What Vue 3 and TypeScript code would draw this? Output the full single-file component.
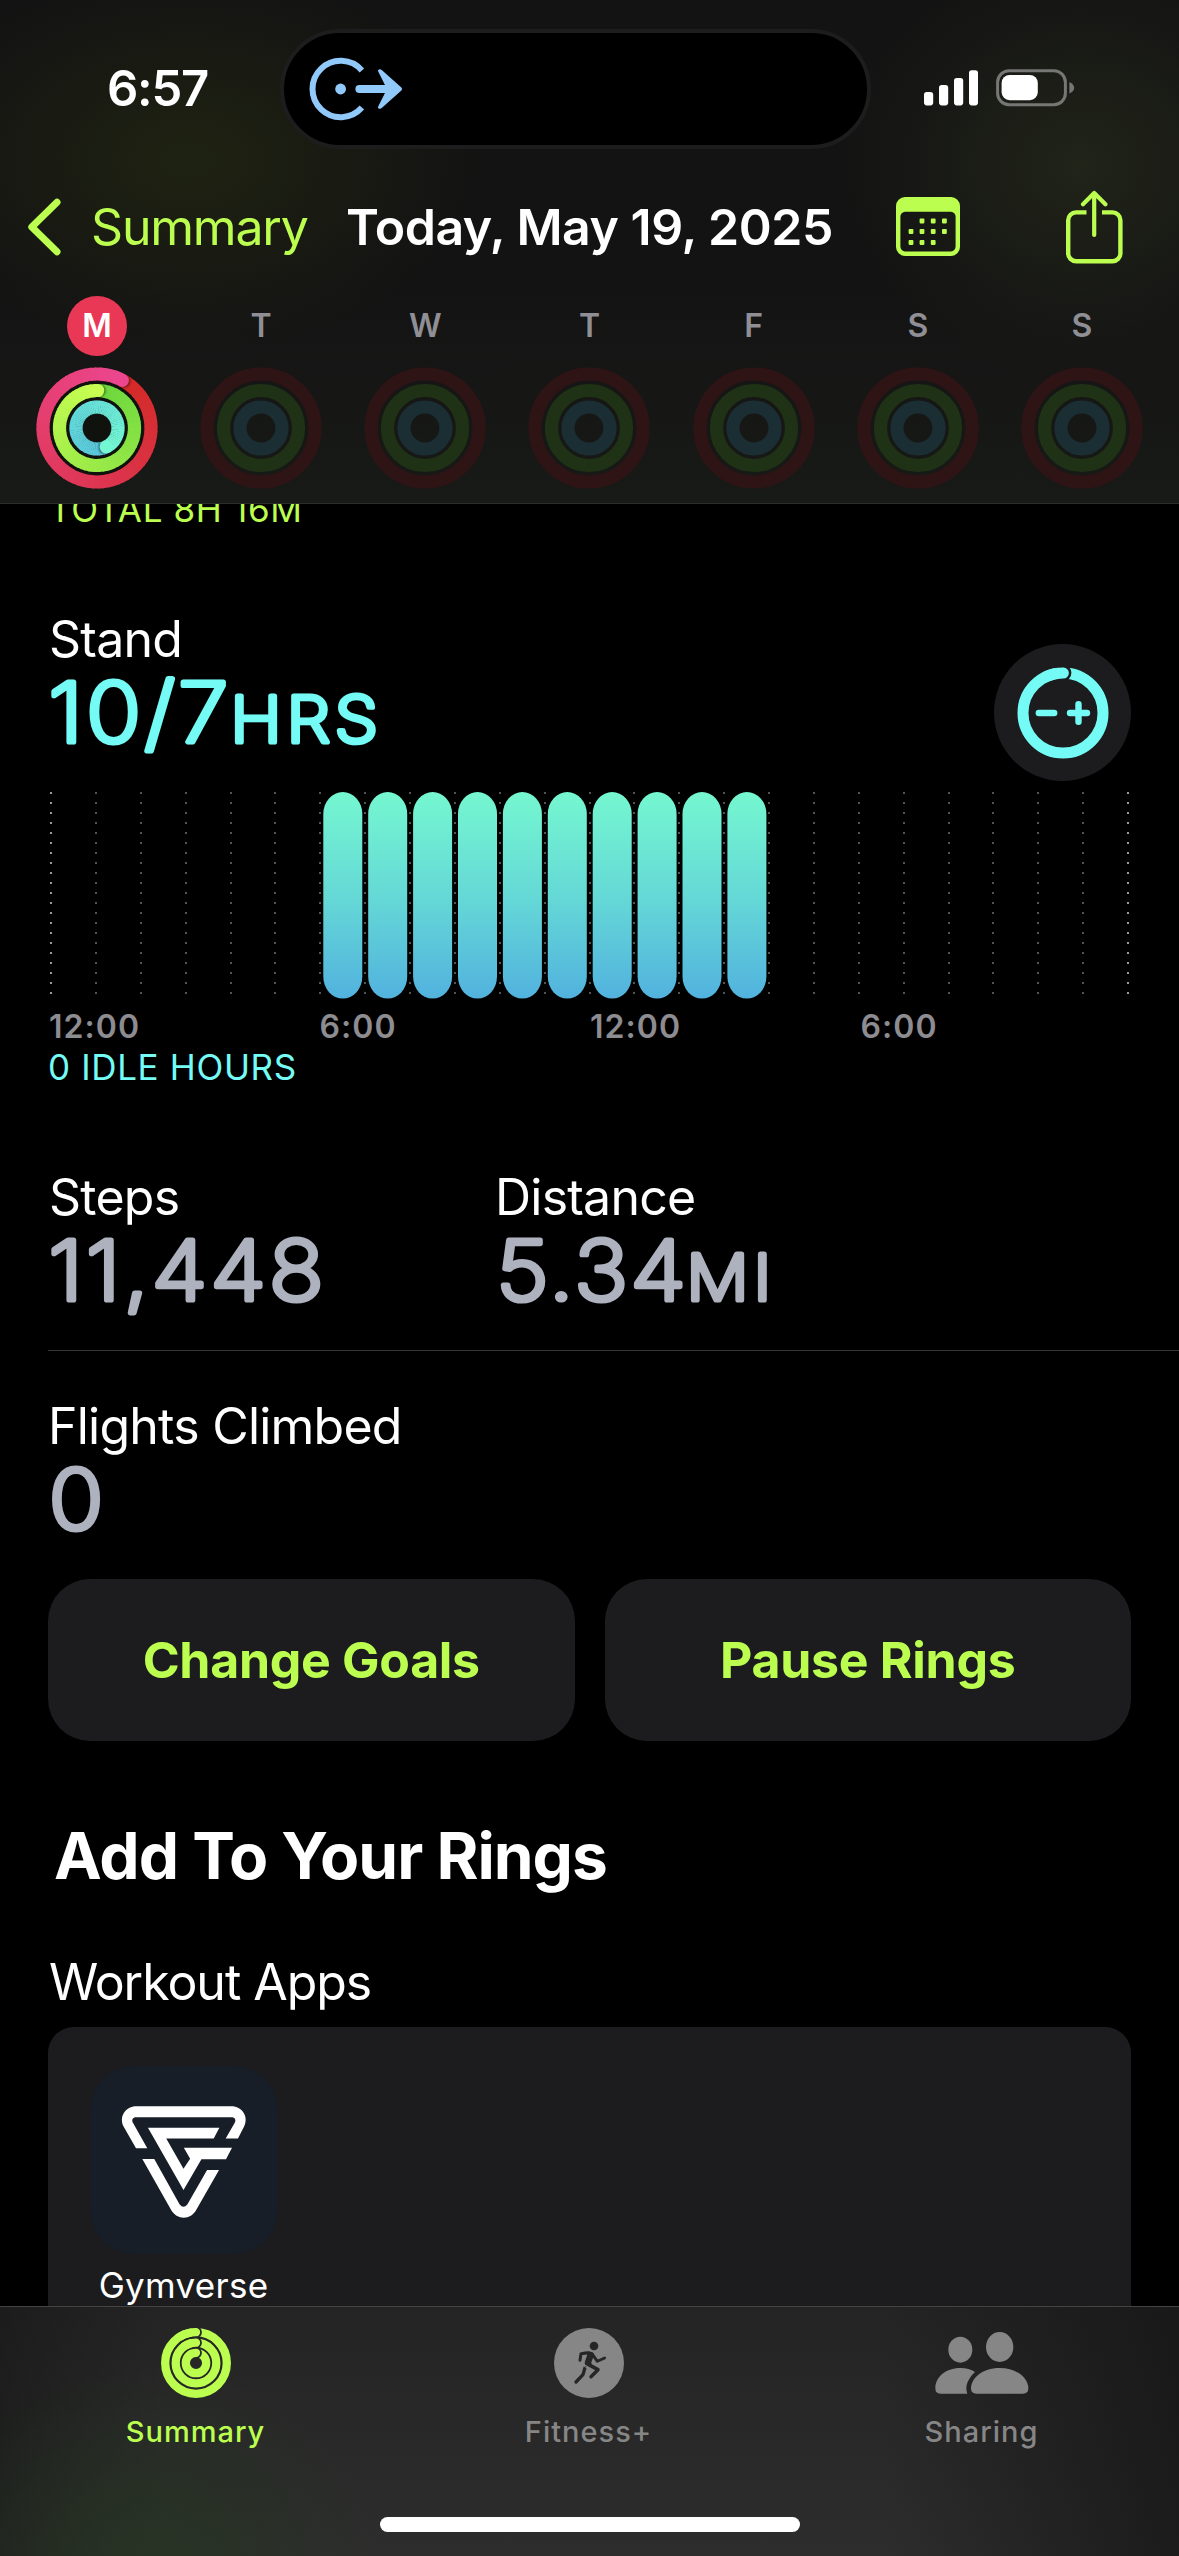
<script setup lang="ts">
type Rgb = [number, number, number]

interface RingSpec {
  radius: number
  start: number
  from: Rgb
  to: Rgb
  dim: string
}

interface Segment {
  d: string
  color: string
}

interface Glyphs {
  text: string
  x: number
  size: number
  spacing: number
}

const days = ['M', 'T', 'W', 'T', 'F', 'S', 'S']

const ringSpecs: RingSpec[] = [
  { radius: 54, start: 28, from: [211, 42, 38], to: [236, 70, 142], dim: '#2f1416' },
  { radius: 37.5, start: 1, from: [108, 215, 62], to: [200, 254, 82], dim: '#203216' },
  { radius: 21, start: 154, from: [88, 196, 220], to: [116, 248, 212], dim: '#1b2e34' },
]

const point = (r: number, deg: number): [number, number] => {
  const a = ((deg - 90) * Math.PI) / 180
  return [61 + r * Math.cos(a), 61 + r * Math.sin(a)]
}

const mix = (a: Rgb, b: Rgb, t: number): string =>
  `rgb(${a.map((v, i) => Math.round(v + (b[i] - v) * t)).join(',')})`

// A swept gradient is drawn as short overlapping arcs, clockwise from the cap.
const segments = (ring: RingSpec): Segment[] => {
  const step = 5
  const list: Segment[] = []
  for (let deg = 0; deg < 360; deg += step) {
    const [x1, y1] = point(ring.radius, ring.start + deg)
    const [x2, y2] = point(ring.radius, ring.start + deg + step + (deg + step < 360 ? 1 : 0))
    list.push({
      d: `M${x1.toFixed(2)} ${y1.toFixed(2)}A${ring.radius} ${ring.radius} 0 0 1 ${x2.toFixed(2)} ${y2.toFixed(2)}`,
      color: mix(ring.from, ring.to, deg / 355),
    })
  }
  return list
}

const todayRings = ringSpecs.map((ring) => ({
  segments: segments(ring),
  cap: point(ring.radius, ring.start),
  shadow: point(ring.radius, ring.start + 110 / ring.radius),
  color: mix(ring.from, ring.to, 1),
}))

const hourLines = Array.from({ length: 25 }, (_, i) => 3 + Math.round(i * 44.875))
const standBars = Array.from({ length: 10 }, (_, i) => 275.3 + i * 44.9)
const hourLabels = ['12:00', '6:00', '12:00', '6:00']

const standValue: Glyphs[] = [
  { text: '10/7', x: 0.4, size: 83, spacing: 3.2 },
  { text: 'HRS', x: 182.6, size: 63.5, spacing: 4.6 },
]
const stepsValue: Glyphs[] = [{ text: '11,448', x: 0.4, size: 83, spacing: 2.95 }]
const distanceValue: Glyphs[] = [
  { text: '5.34', x: 1.3, size: 83, spacing: 2.5 },
  { text: 'MI', x: 191.6, size: 63.5, spacing: 4.4 },
]
const flightsValue: Glyphs[] = [{ text: '0', x: 0.8, size: 83, spacing: 0 }]
const stretch = 1.09

const calendarDots = [
  [26, 24], [37.2, 24], [48.4, 24],
  [15, 34.5], [26, 34.5], [37.2, 34.5], [48.4, 34.5],
  [15, 45.5], [26, 45.5], [37.2, 45.5],
]
</script>

<template>
  <div class="screen">
    <header class="top">
      <div class="status">
        <div class="clock">6:57</div>
        <div class="island">
          <svg class="activity" width="96" height="64" viewBox="0 0 96 64">
            <path d="M52.9 13.4A28.2 28.2 0 1 0 52.9 50.6" fill="none" stroke="#92c9fb" stroke-width="6" />
            <circle cx="31.6" cy="32" r="5.4" fill="#92c9fb" />
            <path d="M50.4 32H80" stroke="#92c9fb" stroke-width="8" stroke-linecap="round" />
            <path d="M69.2 14.6C68.2 12.4 71.2 11.2 73 13.2L92.4 30.6Q93.8 32 92.4 33.4L73 50.8C71.2 52.8 68.2 51.6 69.2 49.4L77 34V30Z" fill="#92c9fb" />
          </svg>
        </div>
        <div class="indicators">
          <svg width="54" height="36" viewBox="0 0 54 36">
            <rect x="0" y="22" width="9.2" height="13.4" rx="2.8" fill="#fff" />
            <rect x="15" y="15" width="9.2" height="20.4" rx="2.8" fill="#fff" />
            <rect x="30" y="8" width="9.2" height="27.4" rx="2.8" fill="#fff" />
            <rect x="45" y="0.2" width="9" height="35.2" rx="2.8" fill="#fff" />
          </svg>
          <svg width="80" height="38" viewBox="0 0 80 38">
            <rect x="1.6" y="1.8" width="67.8" height="34" rx="11.5" fill="none" stroke="#767775" stroke-width="3" />
            <rect x="5.6" y="6" width="36.2" height="25.2" rx="8" fill="#fff" />
            <path d="M73.4 13Q78.2 15.4 78.2 18.8Q78.2 22.2 73.4 24.6Z" fill="#767775" />
          </svg>
        </div>
      </div>

      <nav class="nav">
        <svg class="back" width="34" height="58" viewBox="0 0 34 58">
          <path d="M30 4.2L4.8 29L30 53.8" fill="none" stroke="#bbfe4f" stroke-width="7" stroke-linecap="round" stroke-linejoin="round" />
        </svg>
        <span class="back-label">Summary</span>
        <h1 class="title">Today, May 19, 2025</h1>
        <svg class="calendar" width="64" height="60" viewBox="0 0 64 60">
          <path fill-rule="evenodd" d="M9 0H55A9 9 0 0 1 64 9V50A9 9 0 0 1 55 59H9A9 9 0 0 1 0 50V9A9 9 0 0 1 9 0ZM9 14.8A4.8 4.8 0 0 0 4.4 19.6V49.6A4.8 4.8 0 0 0 9 54.4H55A4.8 4.8 0 0 0 59.6 49.6V19.6A4.8 4.8 0 0 0 55 14.8Z" fill="#bbfe4f" />
          <rect v-for="(dot, i) in calendarDots" :key="i" :x="dot[0] - 2.4" :y="dot[1] - 2.4" width="4.8" height="4.8" rx="0.8" fill="#bbfe4f" />
        </svg>
        <svg class="share" width="57" height="74" viewBox="0 0 57 74">
          <path d="M20.5 22.4H10A7.8 7.8 0 0 0 2.2 30.2V63.4A7.8 7.8 0 0 0 10 71.2H46.6A7.8 7.8 0 0 0 54.4 63.4V30.2A7.8 7.8 0 0 0 46.6 22.4H36" fill="none" stroke="#bbfe4f" stroke-width="4.4" />
          <path d="M28.2 45V3.4M17 14.2L28.2 2.9L39.4 14.2" fill="none" stroke="#bbfe4f" stroke-width="4.2" stroke-linecap="round" stroke-linejoin="round" />
        </svg>
      </nav>

      <div class="week">
        <div v-for="(day, i) in days" :key="i" class="day">
          <span class="badge" :class="{ today: i === 0 }">{{ day }}</span>
          <svg width="122" height="122" viewBox="0 0 122 122">
            <template v-if="i === 0">
              <defs>
                <filter id="cap-shadow" x="-50%" y="-50%" width="200%" height="200%">
                  <feGaussianBlur stdDeviation="1" />
                </filter>
              </defs>
              <g v-for="(ring, r) in todayRings" :key="r">
                <path v-for="(s, k) in ring.segments" :key="k" :d="s.d" :stroke="s.color" fill="none" stroke-width="13.2" />
                <circle :cx="ring.shadow[0]" :cy="ring.shadow[1]" r="6.2" fill="#000" opacity="0.45" filter="url(#cap-shadow)" />
                <circle :cx="ring.cap[0]" :cy="ring.cap[1]" r="6.6" :fill="ring.color" />
              </g>
            </template>
            <template v-else>
              <circle v-for="ring in ringSpecs" :key="ring.radius" cx="61" cy="61" :r="ring.radius" :stroke="ring.dim" fill="none" stroke-width="13.2" />
            </template>
          </svg>
        </div>
      </div>
    </header>

    <main class="content">
      <p class="total">TOTAL 8H 16M</p>

      <section class="stand">
        <div>
          <h2 class="label">Stand</h2>
          <svg class="value cyan" width="500" height="98">
            <g :transform="`scale(${stretch} 1)`">
              <text v-for="g in standValue" :key="g.text" :x="g.x / stretch" y="72.8" :font-size="g.size" :letter-spacing="g.spacing">{{ g.text }}</text>
            </g>
          </svg>
        </div>
        <div class="adjust">
          <svg width="92" height="92" viewBox="-46 -46 92 92">
            <circle r="40" fill="none" stroke="#74fbf5" stroke-width="11" />
            <circle cx="0.4" cy="-40" r="8" fill="#1c1c1e" />
            <path d="M-17 -36.2A40 40 0 0 1 0.4 -40" fill="none" stroke="#74fbf5" stroke-width="11" stroke-linecap="round" />
            <path d="M-24.2 0H-8.8M7 0H24M15.5 -8.8V8.8" fill="none" stroke="#74fbf5" stroke-width="6.4" stroke-linecap="round" />
          </svg>
        </div>
      </section>

      <svg class="chart" width="1083" height="207" viewBox="0 0 1083 207">
        <defs>
          <linearGradient id="bar-fill" x1="0" y1="0" x2="0" y2="1">
            <stop offset="0" stop-color="#75f7d0" />
            <stop offset="0.5" stop-color="#65d9d6" />
            <stop offset="1" stop-color="#52b2de" />
          </linearGradient>
        </defs>
        <line v-for="(x, i) in hourLines" :key="x" :x1="x" :x2="x" y1="0" y2="202" :stroke="i === 0 || i === 24 ? '#98989d' : '#545456'" stroke-width="2" stroke-dasharray="2 8" />
        <rect v-for="x in standBars" :key="x" :x="x" y="0" width="39" height="206.6" rx="19.5" ry="22" fill="url(#bar-fill)" />
      </svg>
      <div class="hours">
        <span v-for="(h, i) in hourLabels" :key="i">{{ h }}</span>
      </div>
      <p class="idle">0 IDLE HOURS</p>

      <section class="pair">
        <div class="stat">
          <h2 class="label">Steps</h2>
          <svg class="value" width="400" height="98">
            <g :transform="`scale(${stretch} 1)`">
              <text v-for="g in stepsValue" :key="g.text" :x="g.x / stretch" y="72.8" :font-size="g.size" :letter-spacing="g.spacing">{{ g.text }}</text>
            </g>
          </svg>
        </div>
        <div class="stat">
          <h2 class="label">Distance</h2>
          <svg class="value" width="400" height="98">
            <g :transform="`scale(${stretch} 1)`">
              <text v-for="g in distanceValue" :key="g.text" :x="g.x / stretch" y="72.8" :font-size="g.size" :letter-spacing="g.spacing">{{ g.text }}</text>
            </g>
          </svg>
        </div>
      </section>

      <section class="flights">
        <h2 class="label">Flights Climbed</h2>
        <svg class="value" width="400" height="98">
          <g :transform="`scale(${stretch} 1)`">
            <text v-for="g in flightsValue" :key="g.text" :x="g.x / stretch" y="72.8" :font-size="g.size" :letter-spacing="g.spacing">{{ g.text }}</text>
          </g>
        </svg>
      </section>

      <div class="actions">
        <button type="button">Change Goals</button>
        <button type="button">Pause Rings</button>
      </div>

      <h2 class="heading">Add To Your Rings</h2>
      <h3 class="subheading">Workout Apps</h3>
      <section class="apps">
        <div class="app">
          <div class="app-icon">
            <svg width="188" height="188" viewBox="149 198 565 566" fill="#fff">
              <path d="M287 446L250 381C234 350 256 319 288 319H574C606 319 628 350 612 381L594 416H557L583 371C590 360 585 352 574 352H288C277 352 272 360 279 371L321 446Z" />
              <path d="M323 384H538L521 416H378L430 507L450 477L431 444H576L558 479H484L430 571Z" />
              <path d="M306 478H342L418 614Q430 630 442 614L501 511H537L469 630C452 663 410 663 392 630Z" />
            </svg>
          </div>
          <span class="app-name">Gymverse</span>
        </div>
      </section>
    </main>

    <footer class="tabs">
      <div class="tab-row">
        <div class="tab active">
          <svg width="70" height="70" viewBox="-35 -35 70 70">
            <g v-for="r in [30.8, 20.3, 10.2]" :key="r" fill="none" stroke="#bbfe4f" stroke-width="8.3">
              <circle :r="r" />
              <circle :cx="0" :cy="-r" r="5.9" fill="#262726" stroke="none" />
              <path :d="`M${-r * 0.5} ${-r * 0.866}A${r} ${r} 0 0 1 0 ${-r}`" stroke-linecap="round" />
            </g>
          </svg>
          <span>Summary</span>
        </div>
        <div class="tab">
          <svg width="70" height="70" viewBox="24 24 210 210">
            <circle cx="129" cy="129" r="105" fill="#868686" />
            <circle cx="144" cy="78" r="13" fill="#262626" />
            <g fill="none" stroke="#262626" stroke-linecap="round" stroke-linejoin="round">
              <path d="M102 121L105 101L128 98" stroke-width="9" />
              <path d="M140 104L154 124L176 114" stroke-width="8.5" />
              <path d="M128 134L156 149L135 170" stroke-width="10.5" />
              <path d="M117 143L111 164L90 186" stroke-width="10" />
            </g>
            <path d="M112 95H134Q144 96 144 106L136 127L138 142L118 135Q114 131 117 124L124 104Z" fill="#262626" />
            <path d="M111 136L124 145" stroke="#868686" stroke-width="3" />
          </svg>
          <span>Fitness+</span>
        </div>
        <div class="tab">
          <svg width="94" height="70" viewBox="405 114 280 210" fill="#868686">
            <ellipse cx="480" cy="179" rx="36" ry="39" />
            <ellipse cx="598" cy="171" rx="41" ry="45" />
            <path d="M405 295C405 262 435 234 480 234C498 234 512 238 524 246C507 262 498 280 498 295Q498 303 501 311H420Q405 311 405 295Z" />
            <path d="M512 295C512 265 545 234 598 234C650 234 684 265 684 295Q684 311 668 311H528Q512 311 512 295Z" />
          </svg>
          <span>Sharing</span>
        </div>
      </div>
      <div class="home-bar"></div>
    </footer>
  </div>
</template>

<style>
body {
  margin: 0;
  background: #000;
}
</style>

<style scoped>
.screen {
  width: 1179px;
  height: 2556px;
  display: flex;
  flex-direction: column;
  overflow: hidden;
  background: #000;
  color: #fff;
  font-family: Inter, "Liberation Sans", sans-serif;
}

h1,
h2,
h3,
p {
  margin: 0;
  font-weight: 400;
}

svg {
  display: block;
  flex: none;
}

/* Header */
.top {
  box-sizing: border-box;
  height: 504px;
  flex: none;
  border-bottom: 1px solid #2b2c2b;
  background:
    radial-gradient(ellipse 290px 190px at 190px 160px, rgba(35, 40, 17, 0.75), rgba(35, 40, 17, 0) 100%),
    radial-gradient(ellipse 240px 210px at 1080px 165px, rgba(36, 40, 26, 0.8), rgba(36, 40, 26, 0) 100%),
    linear-gradient(#131313 55%, #181a17);
}

.status {
  display: flex;
  padding-top: 29px;
}

.clock {
  box-sizing: border-box;
  width: 280px;
  padding-left: 107px;
  font-size: 49px;
  font-weight: 600;
  line-height: 120px;
  letter-spacing: -1.26px;
}

.island {
  box-sizing: border-box;
  width: 591px;
  height: 120px;
  border: 4px solid #1d1d1d;
  border-radius: 60px;
  background: #000;
  display: flex;
  align-items: center;
  padding-left: 25px;
}

.indicators {
  display: flex;
  align-items: center;
  gap: 18px;
  height: 118px;
  padding-left: 53px;
}

.nav {
  display: flex;
  align-items: center;
  height: 80px;
  margin-top: 38px;
  padding-left: 27px;
  line-height: 60px;
  white-space: nowrap;
}

.back-label {
  width: 255px;
  margin-left: 30px;
  font-size: 50px;
  letter-spacing: -1.2px;
  color: #bbfe4f;
}

.title {
  width: 550px;
  font-size: 50px;
  font-weight: 600;
  letter-spacing: -0.45px;
}

.share {
  margin-left: 106px;
}

.week {
  display: flex;
  margin-top: 29px;
  padding-left: 14.8px;
}

.day {
  width: 164.2px;
  flex: none;
  display: flex;
  flex-direction: column;
  align-items: center;
  gap: 11px;
}

.day:first-child svg {
  background: radial-gradient(circle, #10120e 60px, transparent 61px);
}

.badge {
  width: 60px;
  height: 60px;
  border-radius: 50%;
  font-size: 32px;
  font-weight: 600;
  line-height: 60px;
  text-align: center;
  color: #8f8f95;
}

.badge.today {
  background: #e93855;
  color: #fff;
}

/* Scrolled content */
.content {
  flex: 1;
  min-height: 0;
  overflow: hidden;
  padding-left: 48px;
}

.total {
  margin: -16px 0 0 1px;
  font-size: 35px;
  line-height: 42px;
  letter-spacing: 0.65px;
  color: #bbfe4f;
}

.label {
  font-size: 50px;
  line-height: 60px;
  letter-spacing: -0.77px;
}

.stand .label,
.stat:first-child .label {
  margin-left: 1px;
}

.value {
  overflow: visible;
  fill: #aeb1be;
  stroke: #aeb1be;
  stroke-width: 5.2px;
  stroke-linejoin: round;
  font-weight: 200;
}

.value.cyan {
  fill: #74fbf5;
  stroke: #74fbf5;
}

.stand {
  display: flex;
  justify-content: space-between;
  height: 172px;
  margin-top: 79px;
  padding-right: 48px;
}

.adjust {
  width: 137px;
  height: 137px;
  margin-top: 35px;
  border-radius: 50%;
  background: #1c1c1e;
  display: grid;
  place-items: center;
}

.chart {
  margin-top: 11px;
}

.hours {
  display: flex;
  margin: 8px 0 -1px 1px;
  font-size: 32px;
  font-weight: 600;
  line-height: 40px;
  letter-spacing: 1.05px;
  color: #8c8c91;
}

.hours span {
  width: 270.5px;
}

.idle {
  font-size: 35px;
  line-height: 42px;
  letter-spacing: 0.65px;
  color: #74fbf5;
}

.pair {
  display: flex;
  height: 183px;
  margin-top: 79px;
  border-bottom: 1px solid #353537;
}

.stat {
  width: 447px;
}

.flights {
  margin-top: 45px;
}

.actions {
  display: grid;
  grid-template-columns: 1fr 1fr;
  gap: 30px;
  margin: 25px 48px 0 0;
}

.actions button {
  height: 162px;
  padding: 0;
  border: 0;
  border-radius: 42px;
  background: #1c1c1e;
  color: #bbfe4f;
  font: 650 50px/162px Inter, "Liberation Sans", sans-serif;
  letter-spacing: -0.3px;
}

.heading {
  margin: 76px 0 0 6px;
  font-size: 64px;
  font-weight: 700;
  line-height: 78px;
  letter-spacing: -1px;
}

.subheading {
  margin: 57px 0 0 1px;
  font-size: 50px;
  line-height: 60px;
  letter-spacing: -1.05px;
}

.apps {
  height: 400px;
  margin: 15px 48px 0 0;
  border-radius: 26px;
  background: #1c1c1e;
  display: flex;
  padding: 39px 0 0 41.5px;
  box-sizing: border-box;
}

.app {
  width: 188px;
  display: flex;
  flex-direction: column;
  align-items: center;
  gap: 10px;
}

.app-icon {
  border-radius: 44px;
  background: #171e28;
}

.app-name {
  font-size: 35px;
  line-height: 42px;
  letter-spacing: 0.29px;
}

/* Tab bar */
.tabs {
  box-sizing: border-box;
  height: 250px;
  flex: none;
  border-top: 1px solid #434344;
  background:
    radial-gradient(ellipse 230px 200px at 150px 260px, rgba(38, 52, 34, 0.9), rgba(38, 52, 34, 0) 100%),
    linear-gradient(90deg, rgba(20, 22, 20, 0.55), rgba(20, 20, 20, 0) 14%, rgba(20, 20, 20, 0) 75%, rgba(20, 20, 20, 0.7)),
    linear-gradient(#242424, #2d2d2d);
}

.tab-row {
  display: flex;
  margin: 0 1px 0 -1px;
  padding-top: 21px;
}

.tab {
  flex: 1;
  display: flex;
  flex-direction: column;
  align-items: center;
  gap: 16px;
  font-size: 29px;
  font-weight: 500;
  line-height: 36px;
  letter-spacing: 1px;
  color: #868686;
}

.tab.active {
  color: #bbfe4f;
}

.home-bar {
  width: 420px;
  height: 15px;
  margin: 67px auto 0;
  border-radius: 8px;
  background: #fff;
}
</style>
